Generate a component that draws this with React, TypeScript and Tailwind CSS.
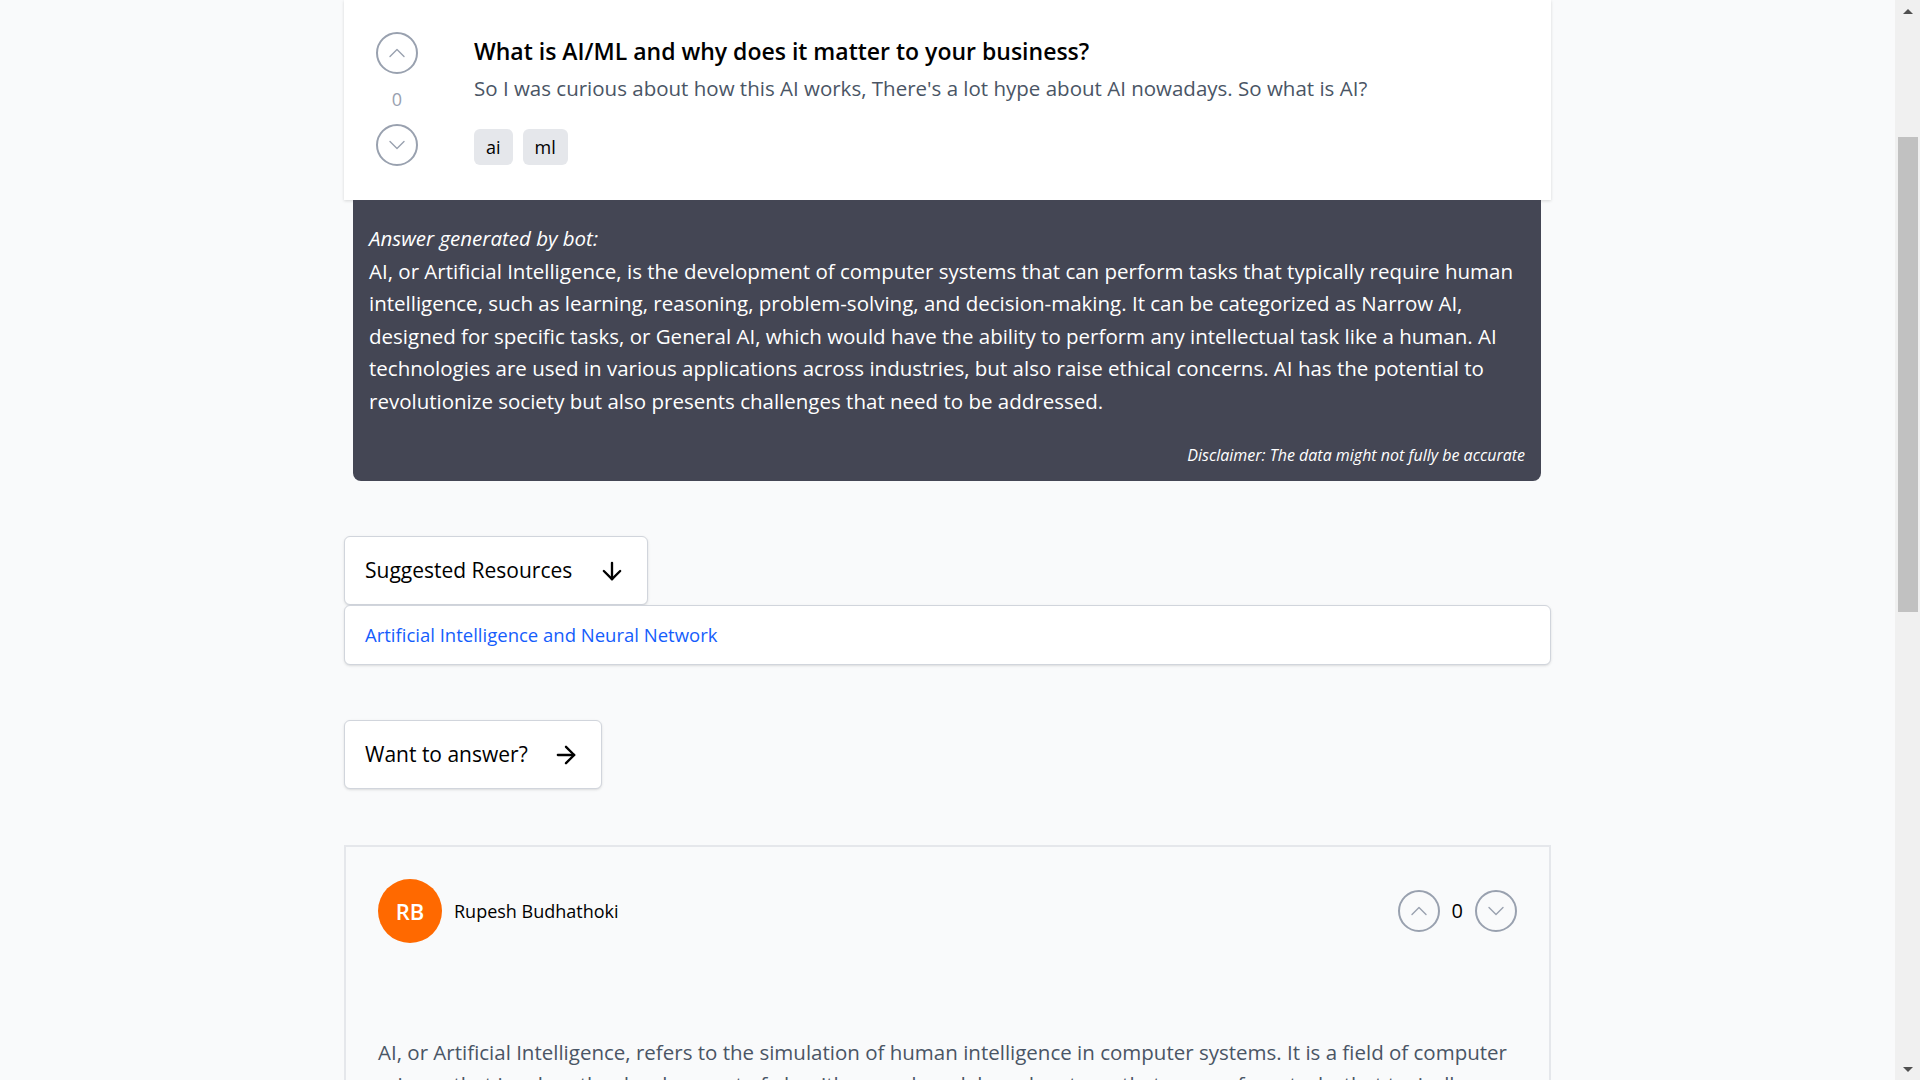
import { ChevronUp, ChevronDown, ArrowDown, ArrowRight } from 'lucide-react';

const botAnswer =
  'AI, or Artificial Intelligence, is the development of computer systems that can perform tasks that typically require human intelligence, such as learning, reasoning, problem-solving, and decision-making. It can be categorized as Narrow AI, designed for specific tasks, or General AI, which would have the ability to perform any intellectual task like a human. AI technologies are used in various applications across industries, but also raise ethical concerns. AI has the potential to revolutionize society but also presents challenges that need to be addressed.';

const userAnswer =
  'AI, or Artificial Intelligence, refers to the simulation of human intelligence in computer systems. It is a field of computer science that involves the development of algorithms and models and systems that can perform tasks that typically require human intelligence, such as learning, reasoning and problem solving.';

function VoteCircle({ dir }: { dir: 'up' | 'down' }) {
  return (
    <button className="w-[42px] h-[42px] rounded-full border-2 border-gray-400 flex items-center justify-center text-gray-400">
      {dir === 'up' ? <ChevronUp size={28} strokeWidth={1.2} /> : <ChevronDown size={28} strokeWidth={1.2} />}
    </button>
  );
}

function Scrollbar() {
  return (
    <div className="w-[25px] h-full bg-[#f0f0f0] flex flex-col items-center shrink-0">
      <div className="h-[22px] flex items-center justify-center">
        <div className="w-0 h-0 border-l-[5px] border-r-[5px] border-b-[5px] border-l-transparent border-r-transparent border-b-[#505050]" />
      </div>
      <div className="mt-[115px] w-[20px] h-[475px] bg-[#c1c1c1]" />
      <div className="flex-1" />
      <div className="h-[22px] flex items-center justify-center">
        <div className="w-0 h-0 border-l-[5px] border-r-[5px] border-t-[5px] border-l-transparent border-r-transparent border-t-[#505050]" />
      </div>
    </div>
  );
}

export default function App() {
  return (
    <div className="flex h-screen w-full overflow-hidden bg-gray-50 font-['Segoe_UI','Open_Sans',sans-serif]">
      <main className="flex-1 overflow-hidden">
        <div className="mx-auto w-[1207px]">
          {/* Question card (scrolled, top edge out of view) */}
          <div className="bg-white shadow-[0_1px_3px_rgba(0,0,0,0.14)] flex gap-14 px-8 pt-8 pb-[34px]">
            <div className="flex flex-col items-center gap-[13px]">
              <VoteCircle dir="up" />
              <span className="text-lg leading-6 text-gray-400">0</span>
              <VoteCircle dir="down" />
            </div>
            <div className="pt-1">
              <h1 className="text-[23px] leading-[30px] font-semibold text-black">
                What is AI/ML and why does it matter to your business?
              </h1>
              <p className="mt-2 text-[20.5px] leading-7 text-gray-600">
                So I was curious about how this AI works, There's a lot hype about AI nowadays. So what is AI?
              </p>
              <div className="mt-[27px] flex gap-2.5">
                <span className="h-9 px-3 flex items-center rounded-md bg-gray-200 text-lg text-black">ai</span>
                <span className="h-9 px-3 flex items-center rounded-md bg-gray-200 text-lg text-black">ml</span>
              </div>
            </div>
          </div>

          {/* Bot answer */}
          <div className="ml-[9px] mr-[10px] bg-[#444654] rounded-b-lg px-4 pt-[22px] pb-4 text-white">
            <p className="text-[20.5px] leading-[32.5px] italic">Answer generated by bot:</p>
            <p className="text-[20.5px] leading-[32.5px]">{botAnswer}</p>
            <p className="mt-7 text-right text-base leading-5 italic">Disclaimer: The data might not fully be accurate</p>
          </div>

          {/* Suggested resources */}
          <div className="mt-[55px]">
            <button className="h-[69px] w-[304px] pl-5 pr-[21px] flex items-center justify-between bg-white border border-gray-300 rounded-md shadow-sm text-[21px] text-black">
              <span>Suggested Resources</span>
              <ArrowDown size={28} strokeWidth={2} />
            </button>
            <div className="h-[60px] px-5 flex items-center bg-white border border-gray-300 rounded-md shadow-sm">
              <a className="text-[18.5px] text-blue-600">Artificial Intelligence and Neural Network</a>
            </div>
          </div>

          {/* Want to answer */}
          <div className="mt-[55px]">
            <button className="h-[69px] w-[258px] pl-5 pr-[21px] flex items-center justify-between bg-white border border-gray-300 rounded-md shadow-sm text-[21px] text-black">
              <span>Want to answer?</span>
              <ArrowRight size={28} strokeWidth={2} />
            </button>
          </div>

          {/* User answer */}
          <div className="mt-[56px] border-2 border-gray-200 p-8">
            <div className="flex items-center justify-between">
              <div className="flex items-center gap-3">
                <div className="w-16 h-16 rounded-full bg-orange-500 flex items-center justify-center text-white text-[22px] font-semibold">
                  RB
                </div>
                <span className="text-lg font-medium text-black">Rupesh Budhathoki</span>
              </div>
              <div className="flex items-center gap-3">
                <VoteCircle dir="up" />
                <span className="text-xl text-black">0</span>
                <VoteCircle dir="down" />
              </div>
            </div>
            <p className="mt-[93px] text-[20.5px] leading-8 text-gray-600">{userAnswer}</p>
          </div>
        </div>
      </main>
      <Scrollbar />
    </div>
  );
}
